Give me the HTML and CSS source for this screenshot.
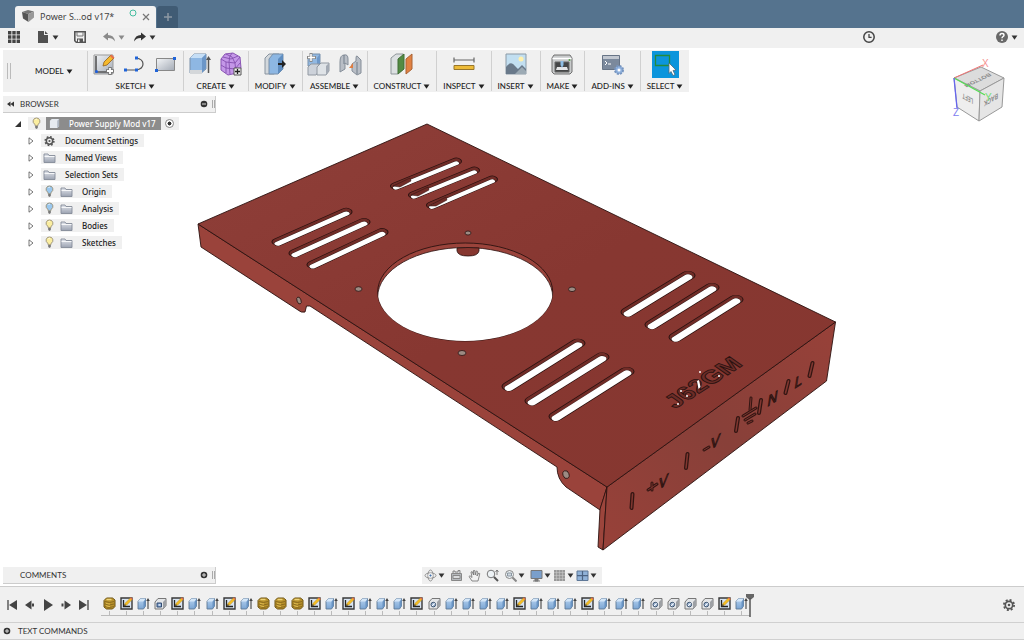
FILE: index.html
```html
<!DOCTYPE html>
<html lang="en">
<head>
<meta charset="utf-8">
<meta name="viewport" content="width=device-width, initial-scale=1">
<title>Power Supply Mod v17</title>
<link rel="stylesheet" href="styles.css">
</head>
<body>
<svg class="sprite" aria-hidden="true">
  <defs>
    <linearGradient id="g-blue" x1="0" y1="0" x2="0" y2="1"><stop offset="0" stop-color="#b5d2f0"/><stop offset="1" stop-color="#7ba5d3"/></linearGradient>
    <linearGradient id="g-steel" x1="0" y1="0" x2="1" y2="1"><stop offset="0" stop-color="#f4f6f8"/><stop offset="1" stop-color="#a3aab5"/></linearGradient>
    <linearGradient id="g-folder" x1="0" y1="0" x2="0" y2="1"><stop offset="0" stop-color="#e3e6ec"/><stop offset="1" stop-color="#9ba2b1"/></linearGradient>
  </defs>
  <symbol id="coil" viewBox="0 0 13 13"><path d="M1 3.500 3.500 1h6L12 3v6.500L9.500 12h-6L1 10z" fill="#b9922b" stroke="#6d5312"/><path d="M2 4.500q4.500 2 9 0M2 7q4.500 2 9 0M2 9.500q4.500 2 9 0" fill="none" stroke="#7d601a" stroke-width=".8"/><path d="M3.500 2.500h5" stroke="#efd47a" stroke-width="1.500"/><path d="M3 6.200q2 1 4 .8M3 8.700q2 1 4 .8" fill="none" stroke="#e8c65a" stroke-width=".8"/></symbol>
  <symbol id="sketch" viewBox="0 0 13 13"><path d="M1 1h11v11H1z" fill="#d8e4f1" stroke="#383838" stroke-width="1.400"/><path d="M3.500 3v6.500H10" fill="none" stroke="#222" stroke-width="1.300"/><path d="m4 9 1-2.800L10.500.8l1.800 1.700L6.800 8z" fill="#f3bd25" stroke="#9a6c15" stroke-width=".3"/><path d="m10 1.300 1-1 1.800 1.700-1 1z" fill="#e5704e"/><path d="m4 9 .8-2 1.300 1.200z" fill="#333"/></symbol>
  <symbol id="extrude" viewBox="0 0 13 13"><path d="M1 4.500 3.500 1.500H8.500V9L6.500 12H1z" fill="url(#g-blue)" stroke="#5f7894" stroke-width=".9"/><path d="M6.500 4.500 8.500 2V9l-2 2.500z" fill="#6994c4"/><path d="M1 4.500 3.500 1.500h5l-2 3z" fill="#d3e6f8"/><path d="M11 12V3" stroke="#444" stroke-width="1.100"/><path d="m9.200 4 1.800-3 1.800 3z" fill="#444"/></symbol>
  <symbol id="hole" viewBox="0 0 13 13"><path d="M1 5 4 1.500h8V8.500L9 12H1z" fill="#e4e6e8" stroke="#777" stroke-width="1"/><path d="M9 5 12 1.800V8.500L9 12z" fill="#9da0a4"/><circle cx="5.300" cy="7.600" r="2.300" fill="#a7bedb" stroke="#3b526e"/><path d="m4 9 2.700-2.800" stroke="#fff"/></symbol>
  <symbol id="shell" viewBox="0 0 13 13"><path d="M1 5 4 1.500h8V8.500L9 12H1z" fill="#e4e6e8" stroke="#777"/><path d="M9 5 12 1.800V8.500L9 12z" fill="#9da0a4"/><path d="M3 6h4.500v4H3z" fill="#7295c4" stroke="#324d72"/><path d="M4.500 7.200h2v1.500h-2z" fill="#e8f1fc"/></symbol>
  <symbol id="folder" viewBox="0 0 13 11"><path d="M1 10V1.500h4l1 1.500h6v7z" fill="url(#g-folder)" stroke="#858b98" stroke-width=".9"/><path d="M1.500 4h10" stroke="#fff" stroke-width=".8"/></symbol>
  <symbol id="bulb" viewBox="0 0 9 13"><path d="M4.500 1a3.300 3.300 0 0 0-2 6q.7.7.7 1.800h2.600q0-1.100.7-1.800a3.300 3.300 0 0 0-2-6z" fill="currentColor" stroke="#8b8266" stroke-width=".8"/><path d="M3.200 9h2.600v2l-1.300 1-1.300-1z" fill="#777"/><path d="M3.300 3q.5-.8 1.300-.8" stroke="#fff" fill="none"/></symbol>
  <symbol id="gear" viewBox="0 0 14 14"><g fill="none" stroke="#555"><circle cx="7" cy="7" r="3.700" stroke-width="1.700"/><circle cx="7" cy="7" r="5.100" stroke-width="1.800" stroke-dasharray="2 2.005"/></g><circle cx="7" cy="7" r="1.300" fill="#555"/></symbol>
  <symbol id="down" viewBox="0 0 8 6"><path d="M.5.500h7L4 5.800z" fill="currentColor"/></symbol>
  <symbol id="closed" viewBox="0 0 6 8"><path d="M1 .8 5 4 1 7.200z" fill="#fff" stroke="#555" stroke-width=".8"/></symbol>
</svg>

<header class="titlebar">
  <div class="tab">
    <svg class="tab-cube" viewBox="0 0 14 14"><path d="m1 3 6-2 6 1.500L7.500 5z" fill="#777"/><path d="m1 3 6.500 2v8L2 9.500z" fill="#555"/><path d="M7.500 5 13 2.500v6L7.500 13z" fill="#999"/></svg>
    <span class="tab-name">Power S...od v17*</span>
    <svg class="sync" viewBox="0 0 8 8"><circle cx="4" cy="4" r="3" fill="none" stroke="#45bda0"/></svg>
    <button class="plain" aria-label="Close tab"><svg class="close" viewBox="0 0 8 8"><path d="m1 1 6 6M7 1 1 7" stroke="#777" stroke-width="1.200"/></svg></button>
  </div>
  <button class="new-tab" aria-label="New tab"><svg viewBox="0 0 10 10"><path d="M5 1v8M1 5h8" stroke="#8c98a3" stroke-width="1.500"/></svg></button>
</header>

<nav class="quickbar" aria-label="Quick access">
  <button class="plain" aria-label="Data panel"><svg class="q" viewBox="0 0 14 14"><path d="M1 1h3.400v3.400H1zM5.300 1h3.400v3.400H5.300zM9.600 1H13v3.400H9.600zM1 5.300h3.400v3.400H1zM5.300 5.300h3.400v3.400H5.300zM9.600 5.300H13v3.400H9.600zM1 9.600h3.400V13H1zM5.300 9.600h3.400V13H5.300zM9.600 9.600H13V13H9.600z" fill="#444"/></svg></button>
  <button class="plain file" aria-label="File"><svg class="q" viewBox="0 0 14 14"><path d="M2 1h6v4h4v8H2z" fill="#505050"/><path d="m9 1 3 3H9z" fill="#505050"/></svg><svg class="arrow"><use href="#down"/></svg></button>
  <button class="plain save" aria-label="Save"><svg class="q" viewBox="0 0 14 14"><path d="M1.800 1.800h10.400v10.400H3.300l-1.500-1.500z" fill="#f0f0f0" stroke="#555" stroke-width="1.600"/><path d="M4 2v4h6V2" fill="none" stroke="#777"/><path d="M4 8.500h6V12H4z" fill="#555"/><path d="M5 9.500h1.500V12H5z" fill="#f0f0f0"/></svg></button>
  <button class="plain faded undo" aria-label="Undo"><svg class="q" viewBox="0 0 14 14"><path d="M1 6.500 6 2.500v2.600q6 0 7 6.400-2.500-3.600-7-3.400v2.400z" fill="currentColor"/></svg><svg class="arrow"><use href="#down"/></svg></button>
  <button class="plain" aria-label="Redo"><svg class="q" viewBox="0 0 14 14"><path d="M13 6.500 8 2.500v2.600q-6 0-7 6.400 2.500-3.600 7-3.400v2.400z" fill="currentColor"/></svg><svg class="arrow"><use href="#down"/></svg></button>
  <button class="plain clock" aria-label="Job status"><svg class="q" viewBox="0 0 14 14"><circle cx="7" cy="7" r="5.200" fill="none" stroke="#444" stroke-width="1.500"/><path d="M7 4v3.300h2.600" fill="none" stroke="#444" stroke-width="1.300"/></svg></button>
  <button class="plain" aria-label="Help"><svg class="q" viewBox="0 0 14 14"><circle cx="7" cy="7" r="6" fill="#686868"/><path d="M5 5.500q0-2 2-2t2 1.700c0 1.300-2 1.300-2 3M7 9.400v1.500" fill="none" stroke="#fff" stroke-width="1.400"/></svg><svg class="arrow"><use href="#down"/></svg></button>
</nav>

<main class="canvas">
  <svg class="model" viewBox="0 48 1024 538" role="img" aria-label="Power supply cover">
    <defs>
      <linearGradient id="top" x1="0" y1="0" x2="1" y2="1"><stop offset="0" stop-color="#8f3f39"/><stop offset=".5" stop-color="#873731"/><stop offset="1" stop-color="#863730"/></linearGradient>
      <linearGradient id="front" x1="0" y1="1" x2="1" y2="0"><stop offset="0" stop-color="#984139"/><stop offset=".5" stop-color="#884039"/><stop offset="1" stop-color="#984139"/></linearGradient>
      <clipPath id="bore"><ellipse cx="465.200" cy="292" rx="87.500" ry="49"/></clipPath>
      <g id="slots-a"><path d="M396 310 456 269M414 325l60-41M432 342l60-43"/></g>
      <g id="slots-b"><path d="M278 403l68-50M295 422l69-52M313 441l69-54"/></g>
      <g id="slots-c"><path d="M509 644l69-72M532 668l70-73M556 694l71-75M628 520l60-61M652 541l60-62M676 562l60-63"/></g>
    </defs>
    <g stroke="#2b1210" stroke-width=".9" stroke-linejoin="round">
      <path d="M198 224 607 487 600 510 566 487Q557 479 557 467L310 306 306.500 306 305 312Q301 313 298 310L201 247z" fill="#9a433b"/>
      <path d="M607 487 603 550 598 547 600 509z" fill="#9c453c"/>
      <path d="M607 487 835.500 322 826.500 381 603 550z" fill="url(#front)"/>
      <path d="M427 124 835.500 322 607 487 198 224z" fill="url(#top)"/>
      <ellipse cx="465.200" cy="292" rx="87.500" ry="49" fill="#9a433b"/>
    </g>
    <ellipse cx="465.200" cy="297" rx="87.500" ry="49.500" fill="#fff" stroke="#2b1210" stroke-width=".8" clip-path="url(#bore)"/>
    <path d="M457 248v3q1 5 11 5t11-5v-3q-11-1-22 0z" fill="#86362f" stroke="#2b1210" stroke-width=".8"/>
    <g transform="scale(1 .6)" fill="none" stroke-linecap="round">
      <g stroke="#2b1210"><use href="#slots-a" stroke-width="12"/><use href="#slots-b" stroke-width="13"/><use href="#slots-c" stroke-width="15"/></g>
      <g stroke="#702c27"><use href="#slots-a" stroke-width="10"/><use href="#slots-b" stroke-width="11"/><use href="#slots-c" stroke-width="13"/></g>
      <g stroke="#2b1210"><use href="#slots-a" y="3" stroke-width="7"/><use href="#slots-b" y="3" stroke-width="8"/><use href="#slots-c" y="3" stroke-width="10"/></g>
      <g stroke="#fff"><use href="#slots-a" y="3" stroke-width="6"/><use href="#slots-b" y="3" stroke-width="7"/><use href="#slots-c" y="3" stroke-width="9"/></g>
    </g>
    <path d="m393 186 17-8 1 3-11 6zM411 195l17-8 1 3-11 6zM429 206l17-9 1 3-11 6z" fill="#702c27" stroke="#2b1210" stroke-width=".5"/>
    <g fill="#9c8b83" stroke="#2b1210" stroke-width=".8">
      <ellipse cx="468" cy="233" rx="3" ry="2"/><ellipse cx="358.500" cy="289" rx="3.500" ry="2.300"/><ellipse cx="572" cy="289.300" rx="3.500" ry="2.300"/><ellipse cx="462" cy="353" rx="4" ry="2.500"/>
      <ellipse cx="299" cy="300.500" rx="2" ry="3.600" transform="rotate(-20 299 300.500)"/><ellipse cx="566" cy="474.600" rx="3" ry="4" transform="rotate(-20 566 474.600)"/>
    </g>
    <text class="engraved deep" transform="matrix(.84 -.54 .76 .53 675 409)" font-size="25">J62GM</text>
    <g fill="#fff"><circle cx="678" cy="404" r="1"/><circle cx="681" cy="391" r="1"/><circle cx="687" cy="396" r="1"/><path d="m697 381 1.500 8 2-2-1.500-7z"/><circle cx="700" cy="372" r="1"/><circle cx="719" cy="376" r="1"/></g>
    <g fill="none" stroke-linecap="round">
      <path d="m631.500 508 1-14M686 468l1.500-14M736 431l2-13M759 413l2-13M785.500 393l3-12M809.500 376l3-13" stroke="#321512" stroke-width="4"/>
      <path d="m631.500 508 1-14M686 468l1.500-14M736 431l2-13M759 413l2-13M785.500 393l3-12M809.500 376l3-13" stroke="#813730" stroke-width="1.500"/>
      <path d="M750 410l1-12M743 416l13-8M745 420l10-6M748 423l4-2M648 490l9-6M652 483v7M704 450l5-3" stroke="#321512" stroke-width="3"/>
      <path d="M750 410l1-12M743 416l13-8M745 420l10-6M748 423l4-2M648 490l9-6M652 483v7M704 450l5-3" stroke="#813730" stroke-width=".9"/>
    </g>
    <g class="engraved" font-size="16">
      <text transform="matrix(.84 -.54 -.15 1 658 490)">V</text><text transform="matrix(.84 -.54 -.15 1 710 450)">V</text>
      <text transform="matrix(.84 -.54 -.15 1 767 407)">N</text><text transform="matrix(.84 -.54 -.15 1 794 389)">L</text>
    </g>
  </svg>

  <svg class="viewcube" viewBox="945 56 64 70" role="img" aria-label="View cube">
    <g stroke="#999" stroke-width="1" stroke-linejoin="round">
      <path d="m954 78 27-11 23 11-24 13z" fill="#dcdcdc"/><path d="m954 78 26 13-1 30-22-14z" fill="#eee"/><path d="m980 91 24-13-2 29-23 14z" fill="#e5e5e5"/>
    </g>
    <g class="faces" font-size="7">
      <text transform="matrix(-.84 .4 -.6 -.5 989 73)">BOTTOM</text>
      <text transform="matrix(-.6 -.35 0 -1.100 973 99)">LEFT</text>
      <text transform="matrix(-.7 .42 0 -1.100 998 93)">BACK</text>
    </g>
    <path d="m954 78 29-13" stroke="#f07575"/><path d="m954 78 31 17" stroke="#55dd55" stroke-width="1.300"/><path d="m954 78 3 30" stroke="#6666ef" stroke-width="1.300"/>
    <g font-size="10"><text x="982" y="67" fill="#f59090">X</text><text x="985" y="101" fill="#75df75">Y</text><text x="953" y="116" fill="#8080f0">Z</text></g>
  </svg>

  <div class="toolbar" role="toolbar" aria-label="Model tools">
    <span class="grip"></span>
    <button class="workspace">MODEL <svg class="arrow"><use href="#down"/></svg></button>
    <div class="group">
      <div class="tools">
        <button class="tool" aria-label="Create sketch"><svg viewBox="0 0 26 26"><path d="M3 3h19v19H3z" fill="url(#g-steel)" stroke="#999"/><path d="M5 4v16h15" fill="none" stroke="#555" stroke-width="1.600"/><circle cx="5.500" cy="19.500" r="1.500" fill="#1d5fe0"/><path d="m12 14 1-4 7-7 3 3-7 7z" fill="#f5b92c" stroke="#925f1c" stroke-width=".8"/><path d="m19 4 1.500-1.500 3 3L22 7z" fill="#e66f4b"/><path d="M19 15v8M15 19h8" stroke="#777" stroke-width="3.500"/><path d="M19 16v6M16 19h6" stroke="#fff" stroke-width="1.800"/></svg></button>
        <button class="tool" aria-label="Line"><svg viewBox="0 0 26 26"><path d="M4 18h10q7-1 7-6t-7-6" fill="none" stroke="#555" stroke-width="1.200"/><path d="M2 16.500h3v3H2zM13 16.500h3v3h-3zM13 4.500h3v3h-3z" fill="#2064d8"/></svg></button>
        <button class="tool" aria-label="Rectangle"><svg viewBox="0 0 26 26"><path d="M3.500 6.500h18v12h-18z" fill="url(#g-steel)" stroke="#888"/><path d="M2 17h3v3H2zM20 5h3v3h-3z" fill="#2064d8"/></svg></button>
      </div>
      <button class="caption">SKETCH <svg class="arrow"><use href="#down"/></svg></button>
    </div>
    <div class="group">
      <div class="tools">
        <button class="tool" aria-label="Extrude"><svg viewBox="0 0 26 26"><path d="m3 6 4-4h12v15l-5 4H3z" fill="#8eb7e3" stroke="#7890aa"/><path d="m3 6 4-4h12l-4 4z" fill="#c5def6"/><path d="m15 6 4-4v14l-4 5z" fill="#6b96c8"/><path d="M3 18h12v4H3z" fill="#d4d7da"/><path d="M21.500 21V6" stroke="#555" stroke-width="1.500"/><path d="m19 8 2.500-4L24 8z" fill="#555"/></svg></button>
        <button class="tool" aria-label="Create form"><svg viewBox="0 0 26 26"><path d="m3 7 4-5 8-1 7 4 1 11-4 5-9 2-7-5z" fill="#c497e8" stroke="#8a56b4"/><path d="m3 7 5 3 9 1 5-6M8 2l6 3 3 6 1 10M3 13l5 3 9 1 5-6M8 10v11M14 1q-3 3-3 9l1 12M5 5l8 2 7-3" fill="none" stroke="#8450b0" stroke-width=".9"/><path d="M16 16h7v7h-7z" fill="#eee" stroke="#555"/><path d="M19.500 17v5M17 19.500h5" stroke="#222" stroke-width="1.300"/></svg></button>
      </div>
      <button class="caption">CREATE <svg class="arrow"><use href="#down"/></svg></button>
    </div>
    <div class="group">
      <div class="tools"><button class="tool" aria-label="Press pull"><svg viewBox="0 0 26 26"><path d="m3 6 4-4h10v16l-5 4H3z" fill="#d3d8dc" stroke="#8994a0"/><path d="m7 7 4-5h10v15l-5 5H7z" fill="#8db7e3" stroke="#7890aa"/><path d="m16 7 5-5v15l-5 5z" fill="#5f8dc0"/><path d="M16 12h5" stroke="#222" stroke-width="2"/><path d="m20 8 4 4-4 4z" fill="#222"/></svg></button></div>
      <button class="caption">MODIFY <svg class="arrow"><use href="#down"/></svg></button>
    </div>
    <div class="group">
      <div class="tools">
        <button class="tool" aria-label="New component"><svg viewBox="0 0 26 26"><path d="m2 6 4-4h8v9l-3 3H2z" fill="#91b8e2" stroke="#7890aa"/><path d="m11 6 3-4v9l-3 3z" fill="#6e98c8"/><path d="m2 15 3-3h8v7l-3 4H2z" fill="#cdd2da" stroke="#9299a2"/><path d="m11 15 4-4h8v8l-3 4h-9z" fill="#dfe3e7" stroke="#9299a2"/><path d="m20 14 3-3v8l-3 4z" fill="#a3aab4"/><path d="M5 1v9M1 5.500h9" stroke="#888" stroke-width="3"/><path d="M5 2v7M2 5.500h7" stroke="#fff" stroke-width="1.500"/></svg></button>
        <button class="tool" aria-label="Joint"><svg viewBox="0 0 26 26"><path d="M3 20V10q0-7 4-7 4-1 4 4v6l-3-2v6zM15 12l4-3V7q0-5 2-2l3 3v13l-4 2-5-4z" fill="#b9bec6" stroke="#858e99"/><path d="M7 3v9M20 10v12" stroke="#737e8b"/><path d="m12 16 4-5v5z" fill="#df7d42"/></svg></button>
      </div>
      <button class="caption">ASSEMBLE <svg class="arrow"><use href="#down"/></svg></button>
    </div>
    <div class="group">
      <div class="tools"><button class="tool" aria-label="Offset plane"><svg viewBox="0 0 26 26"><path d="m2 6 5-4h7v15l-5 5H2z" fill="#dce0e2" stroke="#90979b"/><path d="m9 7 6-5v15l-6 5z" fill="#538b43" stroke="#416f36"/><path d="m17 7 6-5v15l-6 5z" fill="#e18142" stroke="#a96335"/></svg></button></div>
      <button class="caption">CONSTRUCT <svg class="arrow"><use href="#down"/></svg></button>
    </div>
    <div class="group">
      <div class="tools"><button class="tool" aria-label="Measure"><svg viewBox="0 0 26 26"><path d="M3 8h20M3 5.500v5M23 5.500v5" stroke="#666" stroke-width="1.200"/><path d="M3 13.500h20v4H3z" fill="#edbb38" stroke="#98762a"/></svg></button></div>
      <button class="caption">INSPECT <svg class="arrow"><use href="#down"/></svg></button>
    </div>
    <div class="group">
      <div class="tools"><button class="tool" aria-label="Insert image"><svg viewBox="0 0 26 26"><path d="M3 2h20v20H3z" fill="#c2dff1" stroke="#8b9aa6"/><path d="M3 15q5-7 9-1l3 3 4-4 4 4v5H3z" fill="#69798a"/><path d="m12 22 7-7 4 4v3z" fill="#9caab4"/><circle cx="18" cy="7" r="2.500" fill="#fff1ae"/></svg></button></div>
      <button class="caption">INSERT <svg class="arrow"><use href="#down"/></svg></button>
    </div>
    <div class="group">
      <div class="tools"><button class="tool" aria-label="3D print"><svg viewBox="0 0 26 26"><path d="m3 6 2-3h16l2 3v14l-2 2H5l-2-2z" fill="#c8cacb" stroke="#707070"/><path d="M3.500 6.500h19" stroke="#fff" stroke-width="1.500"/><path d="M6 10h14v10H6z" fill="#454647" stroke="#666"/><path d="m8 15-1 3h12l-1-3z" fill="#e4e5e6"/><path d="M11.500 9h3v4L13 16l-1.500-3z" fill="#8fbee4"/><circle cx="20.500" cy="8" r="1" fill="#57a34b"/></svg></button></div>
      <button class="caption">MAKE <svg class="arrow"><use href="#down"/></svg></button>
    </div>
    <div class="group">
      <div class="tools"><button class="tool" aria-label="Scripts and add-ins"><svg viewBox="0 0 26 26"><path d="M2.500 3.500h17v14h-17z" fill="#7b899c" stroke="#677486"/><path d="M3 4h16v3H3z" fill="#c1c7d0"/><path d="m5 9 2 2-2 2M8 12h3" fill="none" stroke="#fff"/><circle cx="19" cy="18" r="4" fill="#92b3df" stroke="#7795bf" stroke-width="2" stroke-dasharray="2 1.140"/><circle cx="19" cy="18" r="1.500" fill="#fff"/></svg></button></div>
      <button class="caption">ADD-INS <svg class="arrow"><use href="#down"/></svg></button>
    </div>
    <div class="group">
      <div class="tools"><button class="tool active" aria-label="Select"><svg viewBox="0 0 26 26"><path d="M3.500 3.500h14v10h-14z" fill="none" stroke="#248a3c" stroke-width="1.300"/><path d="m17 11 7 7-3 .5 2 4-2 1-2-4-2 2z" fill="#fff" stroke="#52697b" stroke-width=".8"/></svg></button></div>
      <button class="caption">SELECT <svg class="arrow"><use href="#down"/></svg></button>
    </div>
  </div>

  <section class="browser">
    <header class="panel-head">
      <svg class="rewind" viewBox="0 0 8 6"><path d="M4 0v6L0 3zM8 0v6L4 3z" fill="#333"/></svg>
      <h2>BROWSER</h2>
      <button class="plain dot" aria-label="Collapse browser"><svg viewBox="0 0 8 8"><circle cx="4" cy="4" r="3.300" fill="#333"/><path d="M2 4h4" stroke="#ddd"/></svg></button><span class="mini-grip"></span>
    </header>
    <ul class="tree">
      <li class="root"><svg class="open" viewBox="0 0 6 6"><path d="M6 0v6H0z" fill="#333"/></svg><div class="chip"><svg class="bulb on"><use href="#bulb"/></svg><span class="selected"><svg class="body" viewBox="0 0 12 12"><path d="M1 3 3 1h8v8l-2 2H1z" fill="#e6ebf1"/><path d="m9 3 2-2v8l-2 2z" fill="#aeb7c3"/></svg>Power Supply Mod v17</span><input class="radio" type="radio" checked aria-label="Activate Power Supply Mod v17"></div></li>
      <li><svg class="twist"><use href="#closed"/></svg><div class="chip"><svg class="ico"><use href="#gear"/></svg><span>Document Settings</span></div></li>
      <li><svg class="twist"><use href="#closed"/></svg><div class="chip"><svg class="ico"><use href="#folder"/></svg><span>Named Views</span></div></li>
      <li><svg class="twist"><use href="#closed"/></svg><div class="chip"><svg class="ico"><use href="#folder"/></svg><span>Selection Sets</span></div></li>
      <li><svg class="twist"><use href="#closed"/></svg><div class="chip"><svg class="bulb off"><use href="#bulb"/></svg><svg class="ico"><use href="#folder"/></svg><span>Origin</span></div></li>
      <li><svg class="twist"><use href="#closed"/></svg><div class="chip"><svg class="bulb off"><use href="#bulb"/></svg><svg class="ico"><use href="#folder"/></svg><span>Analysis</span></div></li>
      <li><svg class="twist"><use href="#closed"/></svg><div class="chip"><svg class="bulb on"><use href="#bulb"/></svg><svg class="ico"><use href="#folder"/></svg><span>Bodies</span></div></li>
      <li><svg class="twist"><use href="#closed"/></svg><div class="chip"><svg class="bulb on"><use href="#bulb"/></svg><svg class="ico"><use href="#folder"/></svg><span>Sketches</span></div></li>
    </ul>
  </section>

  <div class="canvas-foot">
    <header class="panel-head comments">
      <h2>COMMENTS</h2>
      <button class="plain dot" aria-label="Expand comments"><svg viewBox="0 0 8 8"><circle cx="4" cy="4" r="3.300" fill="#333"/><path d="M2 4h4M4 2v4" stroke="#ddd"/></svg></button><span class="mini-grip"></span>
    </header>
    <div class="navbar" role="toolbar" aria-label="Navigation">
      <button class="plain" aria-label="Orbit"><svg class="n" viewBox="0 0 13 13"><g fill="none" stroke="#888" stroke-width=".9"><ellipse cx="6.500" cy="6.500" rx="5.500" ry="2.600"/><ellipse cx="6.500" cy="6.500" rx="2.600" ry="5.500"/></g><circle cx="6.500" cy="6.500" r="2.200" fill="#f0f0f0"/><path d="M5.500 6.500h2M6.500 5.500v2" stroke="#4173b1"/></svg><svg class="arrow"><use href="#down"/></svg></button>
      <button class="plain" aria-label="Look at"><svg class="n" viewBox="0 0 13 13"><path d="M1.500 4.500h10v7h-10z" fill="#b5b9bd" stroke="#888"/><path d="M3 4V2h2v1h3V1.500h2V4M3 6.500h7v3H3z" fill="#d9dbdd" stroke="#888"/></svg></button>
      <button class="plain" aria-label="Pan"><svg class="n" viewBox="0 0 13 13"><path d="M4 12 1 7.500l1-.8 2 1.800L3 3l1.200-.4L5.500 6V1.500h1.300L7.200 6l1-4 1.200.3L9 7l1.800-3 1 .6L10 12z" fill="#f2f2f2" stroke="#707070" stroke-width=".8"/></svg></button>
      <button class="plain" aria-label="Zoom"><svg class="n" viewBox="0 0 13 13"><circle cx="5" cy="5" r="3.800" fill="#eef3f6" stroke="#777"/><path d="m8 8 4 4" stroke="#555" stroke-width="2"/><path d="M11 1v5M9.500 3l1.500-2 1.500 2" stroke="#666" fill="none" stroke-width=".8"/></svg></button>
      <button class="plain" aria-label="Fit"><svg class="n" viewBox="0 0 13 13"><circle cx="5.500" cy="5.500" r="4" fill="#eef3f6" stroke="#888"/><path d="M3.500 4h4v3h-4z" fill="#d1d8df" stroke="#8996a1"/><path d="m8.500 8.500 4 4" stroke="#888" stroke-width="2"/></svg><svg class="arrow"><use href="#down"/></svg></button>
      <button class="plain" aria-label="Display settings"><svg class="n" viewBox="0 0 13 13"><path d="M1 1.500h11v8H1z" fill="#7a9fcb" stroke="#777"/><path d="M5 10h3v2H5zM3 12h7" fill="#888" stroke="#777"/></svg><svg class="arrow"><use href="#down"/></svg></button>
      <button class="plain" aria-label="Grid settings"><svg class="n" viewBox="0 0 13 13"><path d="M1 1h11v11H1z" fill="#999"/><path d="M3.500 1v11M6.500 1v11M9.500 1v11M1 3.500h11M1 6.500h11M1 9.500h11" stroke="#ccc" stroke-width=".5"/></svg><svg class="arrow"><use href="#down"/></svg></button>
      <button class="plain" aria-label="Viewports"><svg class="n" viewBox="0 0 13 13"><path d="M1 2h11v9.500H1z" fill="#90b2d8" stroke="#5f7898"/><path d="M6.500 2v9M1 6.700h11" stroke="#4b6382" stroke-width="1.200"/></svg><svg class="arrow"><use href="#down"/></svg></button>
    </div>
  </div>
</main>

<section class="timeline" aria-label="Timeline">
  <div class="transport">
    <button class="plain" aria-label="Go to start"><svg viewBox="0 0 12 12"><path d="M2 1v10" stroke="#444" stroke-width="1.300"/><path d="M11 1v10L3 6z" fill="#444"/></svg></button>
    <button class="plain" aria-label="Step back"><svg viewBox="0 0 12 12"><path d="M7.500 1.500v9L1 6z" fill="#444"/><path d="M9 4.500v3" stroke="#444" stroke-width="2"/></svg></button>
    <button class="plain" aria-label="Play"><svg viewBox="0 0 12 12"><path d="M2 0v12l9-6z" fill="#444"/></svg></button>
    <button class="plain" aria-label="Step forward"><svg viewBox="0 0 12 12"><path d="M4.500 1.500v9L11 6z" fill="#444"/><path d="M2.500 4.500v3" stroke="#444" stroke-width="2"/></svg></button>
    <button class="plain" aria-label="Go to end"><svg viewBox="0 0 12 12"><path d="M10 1v10" stroke="#444" stroke-width="1.300"/><path d="M1 1v10l8-5z" fill="#444"/></svg></button>
  </div>
  <div class="steps">
    <button class="step" aria-label="Thread"><svg><use href="#coil"/></svg></button>
    <button class="step" aria-label="Sketch"><svg><use href="#sketch"/></svg></button>
    <button class="step" aria-label="Extrude"><svg><use href="#extrude"/></svg></button>
    <button class="step" aria-label="Shell"><svg><use href="#shell"/></svg></button>
    <button class="step" aria-label="Sketch"><svg><use href="#sketch"/></svg></button>
    <button class="step" aria-label="Extrude"><svg><use href="#extrude"/></svg></button>
    <button class="step" aria-label="Extrude"><svg><use href="#extrude"/></svg></button>
    <button class="step" aria-label="Sketch"><svg><use href="#sketch"/></svg></button>
    <button class="step" aria-label="Extrude"><svg><use href="#extrude"/></svg></button>
    <button class="step" aria-label="Thread"><svg><use href="#coil"/></svg></button>
    <button class="step" aria-label="Thread"><svg><use href="#coil"/></svg></button>
    <button class="step" aria-label="Thread"><svg><use href="#coil"/></svg></button>
    <button class="step" aria-label="Sketch"><svg><use href="#sketch"/></svg></button>
    <button class="step" aria-label="Extrude"><svg><use href="#extrude"/></svg></button>
    <button class="step" aria-label="Sketch"><svg><use href="#sketch"/></svg></button>
    <button class="step" aria-label="Extrude"><svg><use href="#extrude"/></svg></button>
    <button class="step" aria-label="Extrude"><svg><use href="#extrude"/></svg></button>
    <button class="step" aria-label="Extrude"><svg><use href="#extrude"/></svg></button>
    <button class="step" aria-label="Sketch"><svg><use href="#sketch"/></svg></button>
    <button class="step" aria-label="Hole"><svg><use href="#hole"/></svg></button>
    <button class="step" aria-label="Extrude"><svg><use href="#extrude"/></svg></button>
    <button class="step" aria-label="Extrude"><svg><use href="#extrude"/></svg></button>
    <button class="step" aria-label="Extrude"><svg><use href="#extrude"/></svg></button>
    <button class="step" aria-label="Extrude"><svg><use href="#extrude"/></svg></button>
    <button class="step" aria-label="Sketch"><svg><use href="#sketch"/></svg></button>
    <button class="step" aria-label="Extrude"><svg><use href="#extrude"/></svg></button>
    <button class="step" aria-label="Extrude"><svg><use href="#extrude"/></svg></button>
    <button class="step" aria-label="Extrude"><svg><use href="#extrude"/></svg></button>
    <button class="step" aria-label="Sketch"><svg><use href="#sketch"/></svg></button>
    <button class="step" aria-label="Extrude"><svg><use href="#extrude"/></svg></button>
    <button class="step" aria-label="Extrude"><svg><use href="#extrude"/></svg></button>
    <button class="step" aria-label="Extrude"><svg><use href="#extrude"/></svg></button>
    <button class="step" aria-label="Hole"><svg><use href="#hole"/></svg></button>
    <button class="step" aria-label="Hole"><svg><use href="#hole"/></svg></button>
    <button class="step" aria-label="Hole"><svg><use href="#hole"/></svg></button>
    <button class="step" aria-label="Hole"><svg><use href="#hole"/></svg></button>
    <button class="step" aria-label="Sketch"><svg><use href="#sketch"/></svg></button>
    <button class="step" aria-label="Extrude"><svg><use href="#extrude"/></svg></button>
    <svg class="marker" viewBox="0 0 10 24"><path d="M1 1h8v3L6 6.500H4L1 4z" fill="#666"/><path d="M5 5v19" stroke="#555" stroke-width="1.500"/></svg>
  </div>
  <button class="plain settings" aria-label="Timeline settings"><svg><use href="#gear"/></svg></button>
</section>

<footer class="textbar">
  <button class="plain dot" aria-label="Expand text commands"><svg viewBox="0 0 8 8"><circle cx="4" cy="4" r="3.300" fill="#333"/><path d="M2 4h4M4 2v4" stroke="#ddd"/></svg></button>
  <h2>TEXT COMMANDS</h2>
</footer>
</body>
</html>
```
FILE: styles.css
```css
* { box-sizing: border-box; }
body {
  margin: 0;
  height: 100vh;
  display: flex;
  flex-direction: column;
  overflow: hidden;
  background: #fff;
  color: #333;
  font-family: Lato, "Liberation Sans", sans-serif;
  font-size: 8px;
  line-height: 12px;
}
svg { display: block; flex: none; }
h2 { margin: 0; font-size: 8px; font-weight: 400; line-height: 12px; }
button { font: inherit; color: inherit; border: 0; padding: 0; background: none; }
.sprite { position: absolute; width: 0; height: 0; }
.plain { display: flex; align-items: center; }
.arrow { width: 7px; height: 5px; }

.titlebar { display: flex; align-items: flex-end; height: 28px; padding-left: 15px; background: #55738e; }
.tab {
  display: flex;
  align-items: center;
  width: 141px;
  height: 22px;
  padding: 0 6px;
  background: #f2f2f2;
  border-radius: 3px 3px 0 0;
  color: #444;
  font-family: "Noto Sans", "Open Sans", sans-serif;
  font-size: 9px;
}
.tab-cube { width: 14px; height: 14px; margin: 0 5px 2px 0; }
.tab-name { white-space: nowrap; }
.sync { width: 8px; height: 8px; margin: 0 5px 8px auto; }
.close { width: 8px; height: 8px; }
.new-tab { display: grid; place-items: center; width: 21px; height: 22px; margin-left: 1px; background: #405b74; border-radius: 3px 3px 0 0; }
.new-tab svg { width: 10px; height: 10px; }

.quickbar { display: flex; align-items: center; height: 20px; padding: 0 6px 2px 7px; background: #f0f0f0; }
.quickbar .plain { gap: 2px; }
.q { width: 14px; height: 14px; }
.file { margin-left: 15px; }
.save { margin-left: 14px; }
.undo { margin: 0 8px 0 15px; }
.faded { color: #8a8a8a; }
.clock { margin: 0 119px 0 auto; }

.canvas { position: relative; flex: 1; min-height: 0; display: flex; flex-direction: column; padding: 2px 3px; }
.model { position: absolute; inset: 0; width: 100%; height: 100%; }
.engraved { fill: #73302a; stroke: #2b1210; stroke-width: 1px; font-family: "Liberation Sans", sans-serif; }
.deep { font-weight: 700; fill: #6b2c27; }
.viewcube { position: absolute; top: 8px; right: 15px; width: 64px; height: 70px; font-family: "Liberation Sans", sans-serif; }
.faces { fill: #888; font-weight: 700; }
.toolbar, .browser, .canvas-foot { position: relative; }

.toolbar { display: flex; align-self: flex-start; height: 42px; padding: 1px 0; background: #f0f0f0; }
.grip { width: 4px; height: 16px; margin: 12px 0 0 4px; border: solid #bbb; border-width: 0 1px; }
.workspace, .caption { display: flex; align-items: center; justify-content: center; gap: 2px; white-space: nowrap; font-weight: 500; color: #222; }
.workspace { padding: 0 14px 0 24px; }
.group { display: flex; flex-direction: column; align-items: center; padding: 0 6px; border-left: 1px solid #d0d0d0; }
.tools { display: flex; gap: 4px; margin: 0 -3px; }
.tool { display: grid; place-items: center; width: 27px; height: 27px; }
.tool svg { width: 26px; height: 26px; }
.tool.active { background: #0c95dc; }
.caption { height: 13px; margin-top: 2px; }

.panel-head { display: flex; align-items: center; width: 213px; height: 17px; padding: 0 0 0 4px; background: #f0f0f0; border: solid #ccc; border-width: 0 1px 1px 0; }
.browser { margin-top: 4px; }
.rewind { width: 7px; height: 6px; margin-right: 6px; }
.dot { margin-left: auto; }
.dot svg { width: 8px; height: 8px; }
.mini-grip { width: 3px; height: 8px; margin-left: 4px; border: solid #aaa; border-width: 0 1px; }
.tree { list-style: none; margin: 2px 0 0; padding: 0; font: 500 8px/13px "Noto Sans", "Open Sans", sans-serif; color: #222; }
.tree li { display: flex; align-items: center; height: 17px; padding-left: 25px; }
.tree .root { padding-left: 12px; }
.chip { display: flex; align-items: center; height: 13px; padding: 0 6px 0 2px; background: #f0f0f0; }
.open { width: 6px; height: 6px; margin-right: 7px; }
.twist { width: 6px; height: 8px; margin-right: 7px; }
.ico { width: 13px; height: 12px; margin-right: 9px; }
.bulb { width: 9px; height: 13px; margin: 0 6px 0 2px; }
.bulb.on { color: #fbeea0; }
.bulb.off { color: #9ac8ef; }
.root .bulb { margin: 0 5px 0 2px; }
.selected { display: flex; align-items: center; height: 13px; padding: 0 5px 0 3px; background: #8c8c8c; color: #fff; }
.body { width: 11px; height: 11px; margin-right: 9px; }
.radio { appearance: none; width: 9px; height: 9px; margin: 0 0 0 4px; border: 1px solid #888; border-radius: 50%; background: radial-gradient(#333 35%, #fff 45%); }
.root .chip { padding-right: 5px; }

.canvas-foot { display: grid; grid-template-columns: 1fr auto 1fr; align-items: end; margin-top: auto; }
.comments { padding-left: 17px; }
.navbar { display: flex; align-items: center; gap: 5px; height: 17px; padding: 0 5px 0 2px; background: #f0f0f0; }
.n { width: 13px; height: 13px; }
.navbar .plain + .plain:nth-last-child(-n+2) { margin-left: -3px; }
.navbar .arrow { margin-left: 1px; }

.timeline { display: flex; height: 36px; border-top: 1px solid #ccc; background: #f0f0f0; }
.transport { display: flex; gap: 6px; padding: 0 11px 0 6px; }
.transport svg { width: 12px; height: 12px; }
.steps { display: flex; width: 654px; }
.step {
  flex: 1;
  display: flex;
  justify-content: center;
  align-items: flex-end;
  height: 29px;
  padding-bottom: 5px;
  border-bottom: 1px solid #bbb;
  background: linear-gradient(#bbb, #bbb) center bottom / 1px 4px no-repeat;
}
.step svg { width: 13px; height: 13px; }
.marker { width: 10px; height: 24px; margin: 6px 0 0 -5px; }
.settings { margin: 0 8px 0 auto; }
.settings svg { width: 14px; height: 14px; }
.textbar { display: flex; align-items: center; gap: 7px; height: 18px; padding-left: 3px; background: #f0f0f0; border: solid #d0d0d0; border-width: 1px 0; }
.textbar .dot { margin: 0; }
```
